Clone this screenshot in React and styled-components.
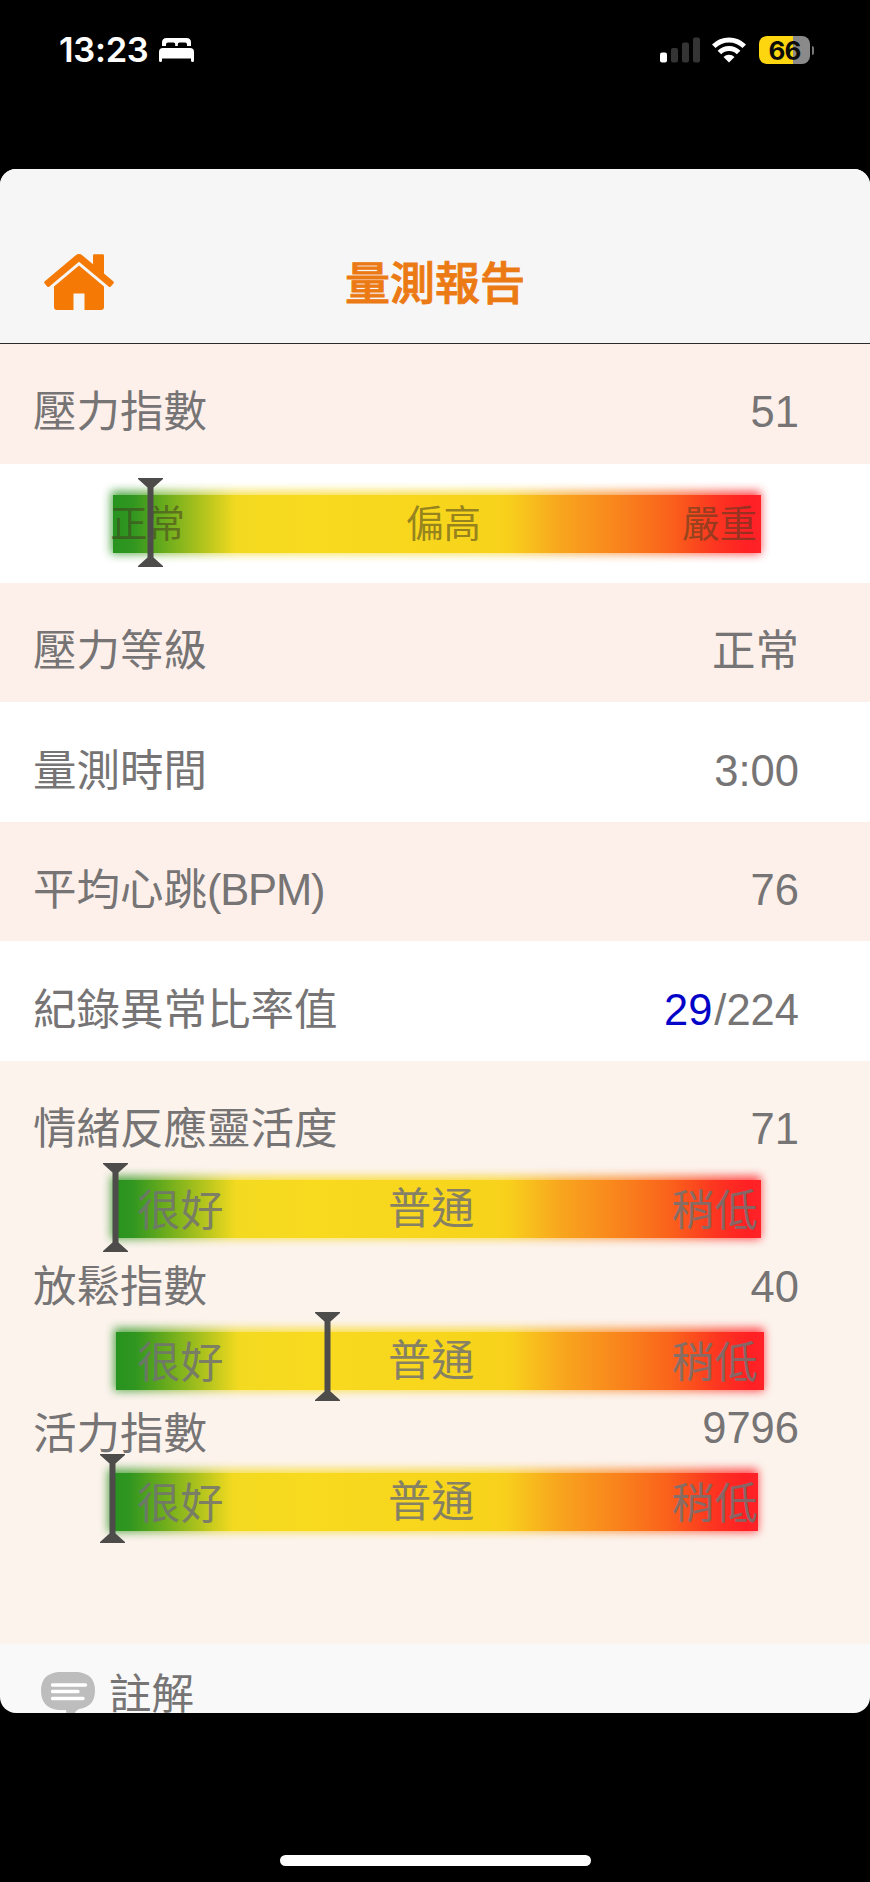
import React from 'react';
import styled, { createGlobalStyle } from 'styled-components';

const FONT = `'Liberation Sans', 'Noto Sans CJK TC', sans-serif`;
const GAUGE_COLORS = `linear-gradient(
  90deg,
  #27931f 0%,
  #309620 3%,
  #76b01c 9%,
  #b3c41d 14%,
  #f3da20 19%,
  #f8da1f 30%,
  #f7d41b 57%,
  #f8d01c 61%,
  #f8a61e 69%,
  #f9801c 79%,
  #fa621b 86%,
  #fc3520 93%,
  #ff2024 98%,
  #ff2328 100%
)`;

const GlobalStyle = createGlobalStyle`
  * {
    box-sizing: border-box;
  }
  body {
    margin: 0;
    background: #000;
    font-family: ${FONT};
  }
`;

const Phone = styled.div`
  width: 870px;
  height: 1882px;
  display: flex;
  flex-direction: column;
  align-items: center;
  background: #000;
`;

const StatusBar = styled.div`
  width: 100%;
  height: 169px;
  padding: 30px 56px 0 59px;
  display: flex;
  justify-content: space-between;
  align-items: flex-start;

  .side {
    height: 40px;
    display: flex;
    align-items: center;
  }
`;

const Time = styled.span`
  width: 89px;
  margin-right: 11px;
  font-family: Inter, sans-serif;
  font-size: 34.5px;
  font-weight: 600;
  line-height: 40px;
  letter-spacing: -0.3px;
  white-space: nowrap;
  color: #fff;
`;

const Battery = styled.div`
  width: 51px;
  height: 28px;
  margin-left: 13px;
  border-radius: 8px;
  background: linear-gradient(90deg, #fdd60f 34px, #8a8a8a 34px);
  font-family: Inter, sans-serif;
  font-size: 26px;
  font-weight: 700;
  line-height: 29px;
  letter-spacing: -0.8px;
  text-align: center;
  color: #0c0c08;
`;

const BatteryTip = styled.div`
  width: 2px;
  height: 9px;
  margin-left: 2px;
  border-radius: 0 3px 3px 0;
  background: #77777a;
`;

const Screen = styled.main`
  width: 100%;
  height: 1544px;
  overflow: hidden;
  border-radius: 16px;
  background: #f9f9f9;
  color: #767474;
  font-size: 43.5px;
`;

const Header = styled.header`
  height: 175px;
  padding: 85px 44px 0;
  display: grid;
  grid-template-columns: 70px 1fr 70px;
  align-items: start;
  background: #f6f6f6;
  border-bottom: 1px solid #2e2a2a;
`;

const Title = styled.h1`
  margin: 1px 0 0;
  font-size: 45px;
  font-weight: 500;
  line-height: 60px;
  text-align: center;
  color: #ec7a14;
  -webkit-text-stroke: 0.9px #ec7a14;
`;

const Row = styled.div`
  height: 119.6px;
  padding: 38.4px 71px 0 33px;
  display: flex;
  justify-content: space-between;
  background: ${({ $tint }) => ($tint ? '#fdf0eb' : '#fff')};
`;

const GaugeRow = styled.div`
  height: 119px;
  padding-top: 31.4px;
  background: #fff;
`;

const Text = styled.span`
  line-height: 60px;
  white-space: nowrap;

  em {
    margin-right: 2px;
    font-style: normal;
    color: #0404c8;
  }
`;

const Latin = styled.span`
  letter-spacing: -1.2px;
`;

const Group = styled.section`
  height: 583px;
  padding-top: 38px;
  background: #fcf3ed;
`;

const GroupLine = styled.div`
  height: 60px;
  margin-top: ${({ $gap }) => $gap || 0}px;
  padding: 0 71px 0 33px;
  display: flex;
  justify-content: space-between;

  ${Text}:last-child {
    margin-top: ${({ $lift }) => -($lift || 0)}px;
  }
`;

const GaugeBox = styled.div`
  position: relative;
  height: 58px;
  margin-top: ${({ $gap }) => $gap || 0}px;
  display: grid;
`;

const Track = styled.div`
  grid-area: 1 / 1;
  position: relative;
  z-index: 0;
  width: 648px;
  height: 58px;
  margin-left: ${({ $left }) => $left}px;

  /* soft glow, heavier on the top and left sides */
  &::before {
    content: '';
    position: absolute;
    z-index: -1;
    inset: -4px 0 -1px -2px;
    background: ${GAUGE_COLORS};
    filter: blur(5px);
    opacity: 0.8;
  }

  &::after {
    content: '';
    position: absolute;
    inset: 0;
    background: ${GAUGE_COLORS};
  }
`;

const Levels = styled.div`
  grid-area: 1 / 1;
  z-index: 1;
  height: 58px;
  padding: ${({ $small }) => ($small ? '0 113px 0 110px' : '0 112px 0 137px')};
  display: grid;
  grid-template-columns: ${({ $small }) => ($small ? '296px 1fr auto' : '251px 1fr auto')};
  font-size: ${({ $small }) => ($small ? 37.5 : 43.3)}px;
  line-height: ${({ $small }) => ($small ? 59 : 62)}px;
  color: ${({ $small }) => ($small ? 'rgba(66, 60, 32, 0.55)' : 'rgba(114, 114, 114, 0.86)')};

  span:nth-child(2) {
    margin-top: ${({ $small }) => ($small ? 0 : -2)}px;
  }
`;

const Marker = styled.svg`
  position: absolute;
  z-index: 2;
  top: ${({ $top }) => $top}px;
  left: ${({ $left }) => $left}px;
  width: 25px;
  height: 89px;
  fill: #4d4c4b;
`;

const Note = styled.footer`
  height: 69px;
  padding: 16px 0 0 41px;
  display: flex;
  align-items: flex-start;
  font-size: 42.5px;

  svg {
    flex: none;
    margin: 12px 14px 0 0;
  }

  ${Text} {
    margin-top: 5px;
  }
`;

const HomeIndicator = styled.div`
  width: 311px;
  height: 11px;
  margin-top: 142px;
  border-radius: 6px;
  background: #fff;
`;

const BedIcon = () => (
  <svg width="35" height="24" viewBox="0 0 35 24" fill="#fff">
    <path d="M3 8V4.500Q3 0 7.500 0H27.500Q32 0 32 4.500V8H28V6.500Q28 4.500 26 4.500H20.500Q18.800 4.500 18.800 6.200V8H16.200V6.200Q16.200 4.500 14.500 4.500H9Q7 4.500 7 6.500V8Z" />
    <path d="M4 10H31Q35 10 35 14V22.500Q35 24 33.500 24Q32 24 32 22.500V20.500H3V22.500Q3 24 1.500 24Q0 24 0 22.500V14Q0 10 4 10Z" />
  </svg>
);

const SignalIcon = () => (
  <svg width="40" height="26" viewBox="0 0 40 26" fill="#343434">
    <rect x="0" y="15.500" width="7" height="10" rx="2" fill="#fff" />
    <rect x="11" y="11" width="7" height="14.500" rx="2" />
    <rect x="22" y="5.500" width="7" height="20" rx="2" />
    <rect x="33" y="0.500" width="7" height="25" rx="2" />
  </svg>
);

const WifiIcon = () => (
  <svg width="34" height="26" viewBox="0 0 34 26" style={{ marginLeft: 12 }}>
    <g fill="none" stroke="#fff" strokeWidth="5">
      <path d="M1.700 9.300A21.500 21.500 0 0 1 32.300 9.300" />
      <path d="M7.400 15.500A13.500 13.500 0 0 1 26.600 15.500" />
    </g>
    <path d="M17 25.500L11.500 20A7.700 7.700 0 0 1 22.500 20Z" fill="#fff" />
  </svg>
);

const HouseIcon = () => (
  <svg width="70" height="56" viewBox="0 0 70 56" fill="#f47a05">
    <path d="M0.600 29.500Q-0.400 28.400 0.800 27.300L31.500 1.400Q35-1.300 38.500 1.400L49 10.200V1.600Q49 0.300 50.300 0.300H58.700Q60 0.300 60 1.600V19.500L69.200 27.300Q70.400 28.400 69.400 29.500L66.800 32.500Q65.800 33.500 64.600 32.500L35 7.800L5.400 32.500Q4.200 33.500 3.200 32.500Z" />
    <path d="M35 11.500L60 32.400V53Q60 56 57 56H40.500V39.500H29.500V56H13Q10 56 10 53V32.400Z" />
  </svg>
);

const CommentIcon = () => (
  <svg width="54" height="50" viewBox="0 0 54 50">
    <path
      d="M17 0H37Q54 2 54 18.500Q54 35 38 37L35 39Q31 46 25 49Q26 43 25 38H17Q0 36 0 18.500Q0 2 17 0Z"
      fill="#bdbdbd"
    />
    <path d="M11.500 13H44.500M11.500 19.500H37M11.500 26.500H42" stroke="#fff" strokeWidth="3.400" strokeLinecap="round" />
  </svg>
);

const Gauge = ({ levels, left = 113, marker, markerTop = -17, gap, small }) => (
  <GaugeBox $gap={gap}>
    <Track $left={left} />
    <Levels $small={small}>
      {levels.map((level) => (
        <span key={level}>{level}</span>
      ))}
    </Levels>
    <Marker $left={marker} $top={markerTop} viewBox="0 0 25 89">
      <path d="M0 0H25V1L15.500 9.500V79.500L25 88V89H0V88L9.500 79.500V9.500L0 1Z" />
    </Marker>
  </GaugeBox>
);

const HEALTH_LEVELS = ['很好', '普通', '稍低'];

const App = () => {
  return (
    <>
      <GlobalStyle />
      <Phone>
        <StatusBar>
          <div className="side">
            <Time>13:23</Time>
            <BedIcon />
          </div>
          <div className="side">
            <SignalIcon />
            <WifiIcon />
            <Battery>66</Battery>
            <BatteryTip />
          </div>
        </StatusBar>
        <Screen>
          <Header>
            <HouseIcon />
            <Title>量測報告</Title>
          </Header>
          <Row $tint>
            <Text>壓力指數</Text>
            <Text>51</Text>
          </Row>
          <GaugeRow>
            <Gauge small levels={['正常', '偏高', '嚴重']} marker={138} />
          </GaugeRow>
          <Row $tint>
            <Text>壓力等級</Text>
            <Text>正常</Text>
          </Row>
          <Row>
            <Text>量測時間</Text>
            <Text>3:00</Text>
          </Row>
          <Row $tint>
            <Text>
              平均心跳<Latin>(BPM)</Latin>
            </Text>
            <Text>76</Text>
          </Row>
          <Row>
            <Text>紀錄異常比率值</Text>
            <Text>
              <em>29</em>/224
            </Text>
          </Row>
          <Group>
            <GroupLine>
              <Text>情緒反應靈活度</Text>
              <Text>71</Text>
            </GroupLine>
            <Gauge levels={HEALTH_LEVELS} gap={21} marker={103} />
            <GroupLine $gap={19}>
              <Text>放鬆指數</Text>
              <Text>40</Text>
            </GroupLine>
            <Gauge levels={HEALTH_LEVELS} gap={15} left={116} marker={315} markerTop={-20} />
            <GroupLine $gap={14} $lift={6}>
              <Text>活力指數</Text>
              <Text>9796</Text>
            </GroupLine>
            <Gauge levels={HEALTH_LEVELS} gap={9} left={110} marker={100} markerTop={-19} />
          </Group>
          <Note>
            <CommentIcon />
            <Text>註解</Text>
          </Note>
        </Screen>
        <HomeIndicator />
      </Phone>
    </>
  );
};

export default App;
